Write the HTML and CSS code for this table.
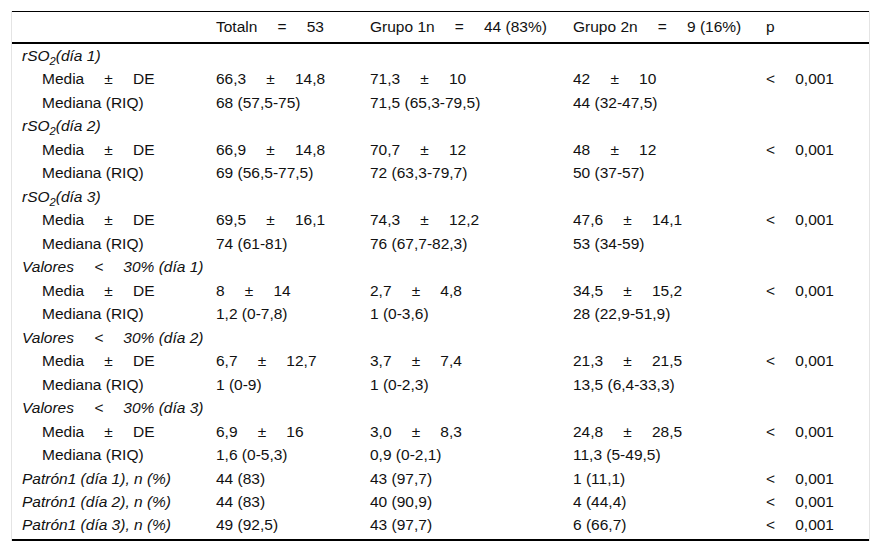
FILE: index.html
```html
<!DOCTYPE html>
<html lang="es">
<head>
<meta charset="utf-8">
<link rel="stylesheet" href="styles.css">
</head>
<body>
<div class="wrap">
<table class="tbl">
<thead>
<tr>
<th class="c1"></th>
<th class="c2">Totaln<span class="op">=</span>53</th>
<th class="c3">Grupo 1n<span class="op">=</span>44 (83%)</th>
<th class="c4">Grupo 2n<span class="op">=</span>9 (16%)</th>
<th class="c5">p</th>
</tr>
</thead>
<tbody>
<tr class="grp"><td colspan="5"><i>rSO<sub>2</sub>(día 1)</i></td></tr>
<tr><td class="ind">Media<span class="op">±</span>DE</td><td>66,3<span class="op">±</span>14,8</td><td>71,3<span class="op">±</span>10</td><td>42<span class="op">±</span>10</td><td><span class="lt">&lt;</span>0,001</td></tr>
<tr><td class="ind">Mediana (RIQ)</td><td>68 (57,5-75)</td><td>71,5 (65,3-79,5)</td><td>44 (32-47,5)</td><td></td></tr>
<tr class="grp"><td colspan="5"><i>rSO<sub>2</sub>(día 2)</i></td></tr>
<tr><td class="ind">Media<span class="op">±</span>DE</td><td>66,9<span class="op">±</span>14,8</td><td>70,7<span class="op">±</span>12</td><td>48<span class="op">±</span>12</td><td><span class="lt">&lt;</span>0,001</td></tr>
<tr><td class="ind">Mediana (RIQ)</td><td>69 (56,5-77,5)</td><td>72 (63,3-79,7)</td><td>50 (37-57)</td><td></td></tr>
<tr class="grp"><td colspan="5"><i>rSO<sub>2</sub>(día 3)</i></td></tr>
<tr><td class="ind">Media<span class="op">±</span>DE</td><td>69,5<span class="op">±</span>16,1</td><td>74,3<span class="op">±</span>12,2</td><td>47,6<span class="op">±</span>14,1</td><td><span class="lt">&lt;</span>0,001</td></tr>
<tr><td class="ind">Mediana (RIQ)</td><td>74 (61-81)</td><td>76 (67,7-82,3)</td><td>53 (34-59)</td><td></td></tr>
<tr class="grp"><td colspan="5"><i>Valores<span class="op">&lt;</span>30% (día 1)</i></td></tr>
<tr><td class="ind">Media<span class="op">±</span>DE</td><td>8<span class="op">±</span>14</td><td>2,7<span class="op">±</span>4,8</td><td>34,5<span class="op">±</span>15,2</td><td><span class="lt">&lt;</span>0,001</td></tr>
<tr><td class="ind">Mediana (RIQ)</td><td>1,2 (0-7,8)</td><td>1 (0-3,6)</td><td>28 (22,9-51,9)</td><td></td></tr>
<tr class="grp"><td colspan="5"><i>Valores<span class="op">&lt;</span>30% (día 2)</i></td></tr>
<tr><td class="ind">Media<span class="op">±</span>DE</td><td>6,7<span class="op">±</span>12,7</td><td>3,7<span class="op">±</span>7,4</td><td>21,3<span class="op">±</span>21,5</td><td><span class="lt">&lt;</span>0,001</td></tr>
<tr><td class="ind">Mediana (RIQ)</td><td>1 (0-9)</td><td>1 (0-2,3)</td><td>13,5 (6,4-33,3)</td><td></td></tr>
<tr class="grp"><td colspan="5"><i>Valores<span class="op">&lt;</span>30% (día 3)</i></td></tr>
<tr><td class="ind">Media<span class="op">±</span>DE</td><td>6,9<span class="op">±</span>16</td><td>3,0<span class="op">±</span>8,3</td><td>24,8<span class="op">±</span>28,5</td><td><span class="lt">&lt;</span>0,001</td></tr>
<tr><td class="ind">Mediana (RIQ)</td><td>1,6 (0-5,3)</td><td>0,9 (0-2,1)</td><td>11,3 (5-49,5)</td><td></td></tr>
<tr><td><i>Patrón1 (día 1), n (%)</i></td><td>44 (83)</td><td>43 (97,7)</td><td>1 (11,1)</td><td><span class="lt">&lt;</span>0,001</td></tr>
<tr><td><i>Patrón1 (día 2), n (%)</i></td><td>44 (83)</td><td>40 (90,9)</td><td>4 (44,4)</td><td><span class="lt">&lt;</span>0,001</td></tr>
<tr class="last"><td><i>Patrón1 (día 3), n (%)</i></td><td>49 (92,5)</td><td>43 (97,7)</td><td>6 (66,7)</td><td><span class="lt">&lt;</span>0,001</td></tr>
</tbody>
</table>
</div>
</body>
</html>
```

FILE: styles.css
```css
html, body {
  margin: 0;
  padding: 0;
  background: #fff;
}
body {
  padding: 11px 11px 0 11px;
  font-family: "Liberation Sans", Arial, sans-serif;
  font-size: 15.5px;
  color: #111;
}
.wrap {
  width: 859px;
  border-left: 1px solid #e4e4e4;
  border-right: 1px solid #e4e4e4;
  box-sizing: border-box;
}
.tbl {
  width: 100%;
  border-collapse: collapse;
  table-layout: fixed;
  border-top: 1px solid #000;
  border-bottom: 2px solid #000;
}
.tbl th {
  font-weight: normal;
  text-align: left;
  height: 30px;
  padding: 0 0 0 10px;
  border-bottom: 2px solid #000;
  white-space: nowrap;
}
.tbl td {
  height: 23.5px;
  padding: 0 0 0 10px;
  line-height: 18px;
  white-space: nowrap;
  vertical-align: middle;
}
.tbl tr.last td {
  height: 23px;
  padding-top: 2px;
  vertical-align: top;
}
.c1 { width: 184px; }
.c2 { width: 144px; }
.c3 { width: 193px; }
.c4 { width: 183px; }
.c5 { width: auto; }
.tbl td.ind { padding-left: 30px; }
.op {
  display: inline-block;
  margin: 0 1.3em;
}
.lt {
  display: inline-block;
  margin-right: 1.3em;
}
sub {
  font-size: 0.72em;
  line-height: 0;
  vertical-align: -0.35em;
}
```
